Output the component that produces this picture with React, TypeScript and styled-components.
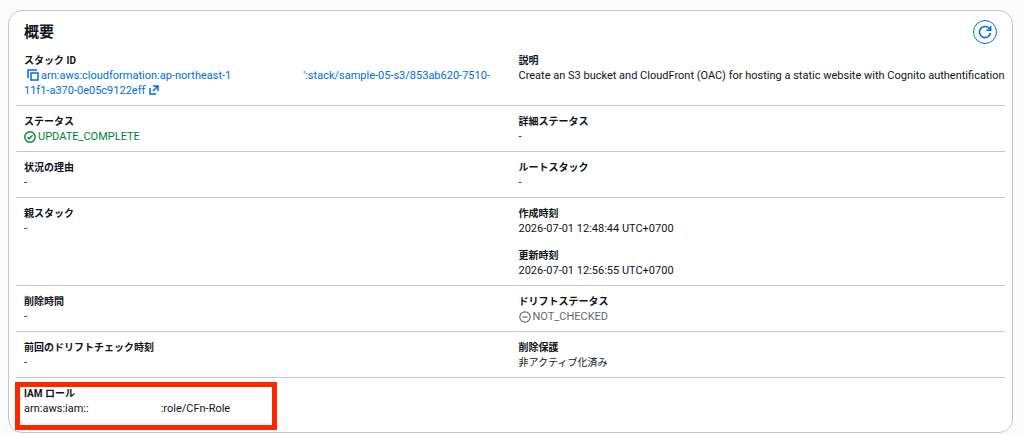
import React from "react";
import styled, { createGlobalStyle } from "styled-components";

const GlobalStyle = createGlobalStyle`
  *, *::before, *::after { box-sizing: border-box; }
  body {
    margin: 0;
    background: #fcfcfd;
    color: #0f141a;
    font-family: Roboto, "Noto Sans CJK JP", sans-serif;
    font-size: 11px;
    line-height: 15px;
  }
`;

const Page = styled.main`
  padding: 10px 11px 2px 8px;
`;

const Card = styled.section`
  padding: 7px 7px 9px;
  background: #fff;
  border: 1px solid #c6c6cd;
  border-radius: 14px;
`;

const Header = styled.header`
  display: flex;
  align-items: center;
  justify-content: space-between;
  height: 27px;
  padding: 0 8px;
`;

const Title = styled.h2`
  margin: 0;
  font-size: 15px;
  line-height: 20px;
  font-weight: 700;
`;

const RefreshButton = styled.button`
  display: flex;
  align-items: center;
  justify-content: center;
  width: 24px;
  height: 24px;
  padding: 0;
  color: #006ce0;
  background: #fff;
  border: 1px solid currentColor;
  border-radius: 50%;
  cursor: pointer;
`;

const Details = styled.div`
  display: flex;
  flex-direction: column;
`;

const Row = styled.div`
  display: grid;
  grid-template-columns: 1fr 1fr;

  & + & {
    border-top: 1px solid #c6c6cd;
  }
`;

const Column = styled.dl`
  display: flex;
  flex-direction: column;
  gap: 12px;
  min-width: 0;
  margin: 0;
  padding: 8px 0 7px 8px;
`;

const Field = styled.div`
  position: relative;
`;

const Label = styled.dt`
  font-size: 10px;
  font-weight: 700;
`;

const Value = styled.dd`
  margin: 0;
`;

const Native = styled.span`
  display: block;
  font-size: 10px;
`;

const StackLink = styled.a`
  color: #006ce0;
  text-decoration: none;
`;

const CopyButton = styled.button`
  display: inline-block;
  height: 12px;
  margin: 0 2px 0 3px;
  padding: 0;
  color: #006ce0;
  background: none;
  border: 0;
  vertical-align: -2px;
  cursor: pointer;
`;

const Masked = styled.span`
  display: inline-block;
  width: 72px;
`;

const Status = styled.span<{ $tone: "success" | "neutral" }>`
  display: flex;
  align-items: center;
  gap: 2px;
  color: ${({ $tone }) => ($tone === "success" ? "#00802f" : "#656871")};
`;

const Icon = styled.svg`
  display: block;
  flex: none;
  fill: none;
  stroke: currentColor;
`;

const ExternalIcon = styled(Icon)`
  display: inline-block;
  margin-left: 4px;
  vertical-align: -1px;
`;

const Highlight = styled.div`
  position: absolute;
  top: -4px;
  left: -9px;
  width: 262px;
  height: 48px;
  border: 5px solid #ff2600;
  pointer-events: none;
`;

const Item = ({ label, children = "-", marked = false }: {
  label: string;
  children?: React.ReactNode;
  marked?: boolean;
}) => (
  <Field>
    <Label>{label}</Label>
    <Value>{children}</Value>
    {marked && <Highlight />}
  </Field>
);

export default function App() {
  return (
    <>
      <GlobalStyle />
      <Page>
        <Card lang="ja">
          <Header>
            <Title>概要</Title>
            <RefreshButton type="button" aria-label="更新">
              <Icon width="14" height="14" viewBox="0 0 14 14" strokeWidth="1.600">
                <path d="M12.400 8A5.500 5.500 0 1 1 11 3.300L12.600 5" />
                <path d="M12.600 1v4.200H8.400" />
              </Icon>
            </RefreshButton>
          </Header>
          <Details>
            <Row>
              <Column>
                <Item label="スタック ID">
                  <CopyButton type="button" aria-label="コピー">
                    <Icon width="12" height="12" viewBox="0 0 12 12" strokeWidth="1.500">
                      <path d="M1 9V1h9" />
                      <path d="M4 4h7v7H4z" />
                    </Icon>
                  </CopyButton>
                  <StackLink href="#stack">
                    arn:aws:cloudformation:ap-northeast-1
                    <Masked />
                    ':stack/sample-05-s3/853ab620-7510-11f1-a370-0e05c9122eff
                    <ExternalIcon width="10" height="10" viewBox="0 0 10 10" strokeWidth="1.500">
                      <path d="M1 3v6h6M4 1h5v5M9 1L4 6" />
                    </ExternalIcon>
                  </StackLink>
                </Item>
              </Column>
              <Column>
                <Item label="説明">
                  Create an S3 bucket and CloudFront (OAC) for hosting a static website with Cognito authentification
                </Item>
              </Column>
            </Row>
            <Row>
              <Column>
                <Item label="ステータス">
                  <Status $tone="success">
                    <Icon width="12" height="12" viewBox="0 0 12 12" strokeWidth="1.400">
                      <circle cx="6" cy="6" r="5.200" />
                      <path d="M3.500 6l1.800 1.800L8.500 4.200" />
                    </Icon>
                    UPDATE_COMPLETE
                  </Status>
                </Item>
              </Column>
              <Column><Item label="詳細ステータス" /></Column>
            </Row>
            <Row>
              <Column><Item label="状況の理由" /></Column>
              <Column><Item label="ルートスタック" /></Column>
            </Row>
            <Row>
              <Column><Item label="親スタック" /></Column>
              <Column>
                <Item label="作成時刻">2026-07-01 12:48:44 UTC+0700</Item>
                <Item label="更新時刻">2026-07-01 12:56:55 UTC+0700</Item>
              </Column>
            </Row>
            <Row>
              <Column><Item label="削除時間" /></Column>
              <Column>
                <Item label="ドリフトステータス">
                  <Status $tone="neutral">
                    <Icon width="12" height="12" viewBox="0 0 12 12" strokeWidth="1.200">
                      <circle cx="6" cy="6" r="5.200" />
                      <path d="M3.500 6h5" />
                    </Icon>
                    NOT_CHECKED
                  </Status>
                </Item>
              </Column>
            </Row>
            <Row>
              <Column><Item label="前回のドリフトチェック時刻" /></Column>
              <Column><Item label="削除保護"><Native>非アクティブ化済み</Native></Item></Column>
            </Row>
            <Row>
              <Column>
                <Item label="IAM ロール" marked>
                  arn:aws:iam::<Masked />:role/CFn-Role
                </Item>
              </Column>
            </Row>
          </Details>
        </Card>
      </Page>
    </>
  );
}
